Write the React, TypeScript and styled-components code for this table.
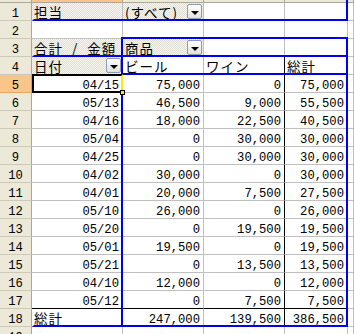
import styled, { createGlobalStyle, css } from 'styled-components';

const GRID = '#C0C0C0';
const HEAD_BG = '#ECE9D8';
const HEAD_LINE = '#ACA899';
const HEAD_SEP = '#CDC9BA';
const HEAD_ON = '#F9C588';
const BLUE = '#0000EE';

const GlobalStyle = createGlobalStyle`
  html, body {
    margin:0;
    padding:0;
    background:#fff;
  }
`

const Sheet = styled.div`
  position:relative;
  display:grid;
  grid-template-columns: 32px 91px 81px 81px 63px 1fr;
  grid-template-rows: 3px repeat(19, 18px);
  width:354px;
  height:334px;
  overflow:hidden;
  background:#fff;
`

const StripCell = styled.div<{ $on?: boolean }>`
  box-sizing:border-box;
  border-right:1px solid ${HEAD_LINE};
  border-bottom:1px solid ${HEAD_LINE};
  background:${p => p.$on ? HEAD_ON : HEAD_BG};
`

const RowHead = styled.div<{ $on?: boolean }>`
  box-sizing:border-box;
  display:flex;
  align-items:flex-end;
  justify-content:center;
  border-right:1px solid ${HEAD_LINE};
  border-bottom:1px solid ${p => p.$on ? '#E3A866' : HEAD_SEP};
  background:${p => p.$on ? HEAD_ON : HEAD_BG};
  font-family:"Liberation Mono", monospace;
  font-size:12.2px;
  line-height:12px;
  color:#000;
`

type CellProps = {
  $field?: boolean;
  $right?: boolean;
  $rc?: string;
  $bc?: string;
}

const Cell = styled.div<CellProps>`
  box-sizing:border-box;
  display:flex;
  align-items:flex-end;
  justify-content:${p => p.$right ? 'flex-end' : 'flex-start'};
  padding:0 3px 0 2px;
  border-right:1px solid ${p => p.$rc ?? GRID};
  border-bottom:1px solid ${p => p.$bc ?? GRID};
  background:#fff;
  color:#000;
  white-space:nowrap;
  overflow:hidden;
  ${p => p.$field && css`
    padding-right:1px;
    background: repeating-conic-gradient(#F6F5F0 0 25%, #E1DFD3 0 50%) 0 0 / 2px 2px;
  `}
`

const Num = styled.span`
  font-family:"Liberation Mono", monospace;
  font-size:12.2px;
  line-height:12px;
`

const Label = styled.span`
  font-family:"Noto Sans CJK JP", sans-serif;
  font-size:13.5px;
  line-height:12px;
  letter-spacing:1px;
  word-spacing:5px;
  padding-bottom:2px;
`

const DropButton = styled.div`
  box-sizing:border-box;
  width:15px;
  height:15px;
  margin-left:auto;
  align-self:center;
  display:flex;
  align-items:center;
  justify-content:center;
  border:1px solid #8A9DBB;
  border-radius:2px;
  background:linear-gradient(#FFFFFF, #E2E1DA);
`

const Arrow = styled.div`
  width:0;
  height:0;
  margin-top:2px;
  border-left:4px solid transparent;
  border-right:4px solid transparent;
  border-top:4px solid #000;
`

const SIDE: Record<string, string> = { t: 'top', r: 'right', b: 'bottom', l: 'left' };

type OutlineProps = { $l: number; $t: number; $r: number; $b: number; $sides: string };

// blue drop-area outline, drawn on the grid lines l/t/r/b
const Outline = styled.div<OutlineProps>`
  position:absolute;
  box-sizing:border-box;
  pointer-events:none;
  left:${p => p.$l - 1}px;
  top:${p => p.$t - 1}px;
  width:${p => p.$r - p.$l + 2}px;
  height:${p => p.$b - p.$t + 2}px;
  border:2px solid transparent;
  ${p => p.$sides.split('').map(s => `border-${SIDE[s]}-color:${BLUE};`).join('')}
`

const Selection = styled.div`
  position:absolute;
  box-sizing:border-box;
  pointer-events:none;
  left:32px;
  top:74px;
  width:91px;
  height:19px;
  border:2px solid #000;
  border-right-color:#F4F000;
`

const FillHandle = styled.div`
  position:absolute;
  box-sizing:border-box;
  left:120px;
  top:90px;
  width:5px;
  height:5px;
  border:1px solid #000;
  background:#F4F000;
`

type CellDef = {
  text?: string;
  num?: boolean;
  field?: boolean;
  drop?: boolean;
  rc?: string;
  bc?: string;
};

const BLACK = '#000';

const data: string[][] = [
  ['04/15', '75,000', '0', '75,000'],
  ['05/13', '46,500', '9,000', '55,500'],
  ['04/16', '18,000', '22,500', '40,500'],
  ['05/04', '0', '30,000', '30,000'],
  ['04/25', '0', '30,000', '30,000'],
  ['04/02', '30,000', '0', '30,000'],
  ['04/01', '20,000', '7,500', '27,500'],
  ['05/10', '26,000', '0', '26,000'],
  ['05/20', '0', '19,500', '19,500'],
  ['05/01', '19,500', '0', '19,500'],
  ['05/21', '0', '13,500', '13,500'],
  ['04/10', '12,000', '0', '12,000'],
  ['05/12', '0', '7,500', '7,500'],
];

const empty = (): CellDef[] => [{}, {}, {}, {}, {}];

const rows: CellDef[][] = [
  [{ text: '担当', field: true }, { text: '(すべて)', field: true, drop: true }, {}, {}, {}],
  empty(),
  [{ text: '合計 / 金額', field: true }, { text: '商品', field: true, drop: true }, {}, {}, {}],
  [{ text: '日付', field: true, drop: true }, { text: 'ビール' }, { text: 'ワイン', rc: BLACK }, { text: '総計' }, {}],
  ...data.map((r, i) => {
    const bc = i === data.length - 1 ? BLACK : undefined;
    return [
      { text: r[0], num: true, bc },
      { text: r[1], num: true, bc },
      { text: r[2], num: true, rc: BLACK, bc },
      { text: r[3], num: true, bc },
      {},
    ] as CellDef[];
  }),
  [{ text: '総計' }, { text: '247,000', num: true }, { text: '139,500', num: true, rc: BLACK }, { text: '386,500', num: true }, {}],
  empty(),
];

export default function App() {
  return (
    <>
      <GlobalStyle />
      <Sheet>
        {[0, 1, 2, 3, 4, 5].map(c => <StripCell key={'s' + c} $on={c === 1} />)}
        {rows.map((cells, ri) => (
          <Row key={ri} n={ri + 1} cells={cells} />
        ))}
        <Outline $l={33} $t={-5} $r={347} $b={20} $sides="rb" />
        <Outline $l={122} $t={38} $r={347} $b={56} $sides="tlrb" />
        <Outline $l={33} $t={40} $r={122} $b={56} $sides="b" />
        <Outline $l={122} $t={56} $r={347} $b={74} $sides="lrb" />
        <Outline $l={33} $t={74} $r={122} $b={326} $sides="b" />
        <Outline $l={122} $t={74} $r={347} $b={326} $sides="lrb" />
        <Selection />
        <FillHandle />
      </Sheet>
    </>
  );
}

function Row({ n, cells }: { n: number; cells: CellDef[] }) {
  return (
    <>
      <RowHead $on={n === 5}>{n}</RowHead>
      {cells.map((c, i) => (
        <Cell key={i} $field={c.field} $right={c.num} $rc={c.rc} $bc={c.bc}>
          {c.text && (c.num ? <Num>{c.text}</Num> : <Label>{c.text}</Label>)}
          {c.drop && <DropButton><Arrow /></DropButton>}
        </Cell>
      ))}
    </>
  );
}
